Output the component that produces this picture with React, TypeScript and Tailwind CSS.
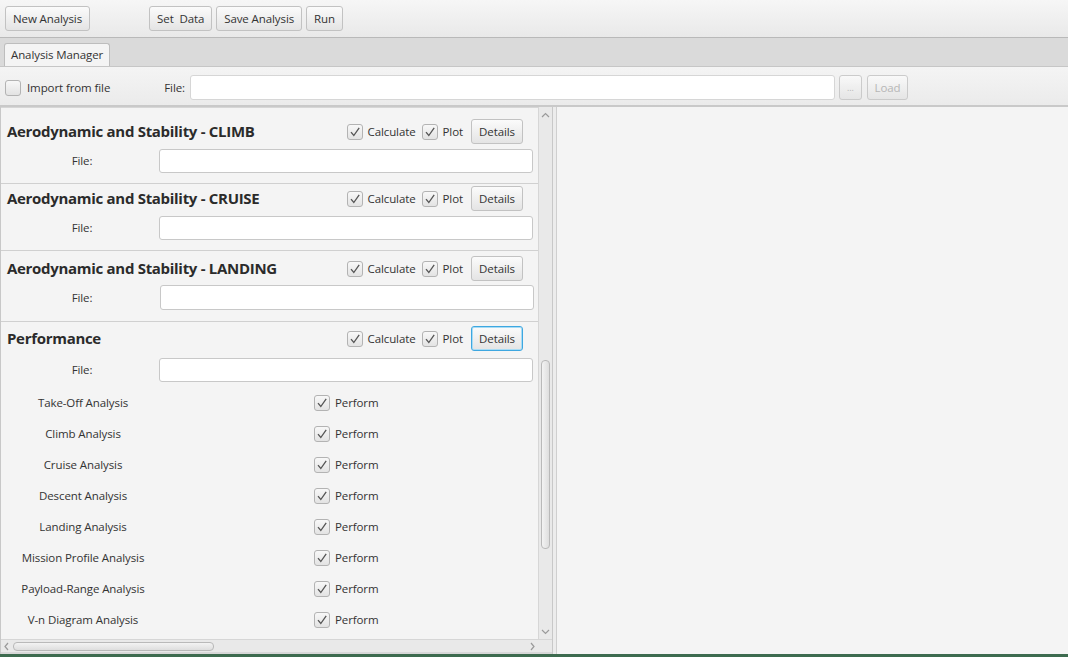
import React from 'react'

const FONT = { fontFamily: '"Open Sans", "Noto Sans", Arial, sans-serif' }

const TXT = 'text-[11.5px] tracking-[-0.1px]'

function Btn({ children, w, disabled, focused }: { children: React.ReactNode; w?: string; disabled?: boolean; focused?: boolean }) {
  return (
    <div
      className={`h-[25px] ${w ?? ''} px-[7px] flex items-center justify-center rounded-[3px] border ${TXT} whitespace-pre bg-gradient-to-b from-[#fbfbfb] to-[#e4e4e4] ${
        focused ? 'border-[#3ea7e0] shadow-[0_0_0_1px_#a8dcf5_inset]' : 'border-[#c2c2c2]'
      } ${disabled ? 'text-[#a9a9a9] opacity-80' : 'text-[#333]'}`}
    >
      {children}
    </div>
  )
}

function Check({ checked = true }: { checked?: boolean }) {
  return (
    <div className="w-[16px] h-[16px] shrink-0 rounded-[3px] border border-[#b3b3b3] bg-gradient-to-b from-[#f8f8f8] to-[#e3e3e3] flex items-center justify-center">
      {checked && (
        <svg width="12" height="12" viewBox="0 0 12 12">
          <path d="M2 6.2 L4.8 9.5 L10.2 1.8" fill="none" stroke="#555" strokeWidth="1.3" />
        </svg>
      )}
    </div>
  )
}

function Field({ className = '' }: { className?: string }) {
  return <div className={`rounded-[3px] border border-[#c8c8c8] bg-white ${className}`} />
}

function Section({
  title,
  focused,
  children,
  pt,
  gap,
  pb,
  field = 'w-[374px] h-[24px]',
}: {
  title: string
  focused?: boolean
  children?: React.ReactNode
  pt: string
  gap: string
  pb: string
  field?: string
}) {
  return (
    <div className={`border-b border-[#d0d0d0] ${pt} ${pb}`}>
      <div className="h-[25px] flex items-center pl-[6px] pr-[15px]">
        <div className="flex-1 text-[15px] font-bold text-[#2b2b2b] tracking-[-0.3px]">{title}</div>
        <Check />
        <span className={`ml-[4px] mr-[6px] ${TXT} text-[#333]`}>Calculate</span>
        <Check />
        <span className={`ml-[5px] mr-[8px] ${TXT} text-[#333]`}>Plot</span>
        <Btn w="w-[52px]" focused={focused}>Details</Btn>
      </div>
      <div className={`${gap} flex items-center`}>
        <div className={`w-[158px] pl-[4px] text-center ${TXT} text-[#333]`}>File:</div>
        <Field className={field} />
      </div>
      {children}
    </div>
  )
}

const PERFORM = [
  'Take-Off Analysis',
  'Climb Analysis',
  'Cruise Analysis',
  'Descent Analysis',
  'Landing Analysis',
  'Mission Profile Analysis',
  'Payload-Range Analysis',
  'V-n Diagram Analysis',
]

export default function App() {
  return (
    <div className="w-[1068px] h-[657px] overflow-hidden flex flex-col bg-[#f4f4f4] text-[#333]" style={FONT}>
      {/* Toolbar */}
      <div className="h-[38px] shrink-0 flex items-center px-[5px] gap-[4px] bg-gradient-to-b from-[#f6f6f6] to-[#e9e9e9] border-b border-[#b9b9b9]">
        <Btn>New Analysis</Btn>
        <div className="w-[51px]" />
        <Btn>Set  Data</Btn>
        <Btn>Save Analysis</Btn>
        <Btn>Run</Btn>
      </div>

      {/* Tab header */}
      <div className="h-[29px] shrink-0 bg-[#dadada] flex items-end pl-[4px] border-b border-[#c6c6c6]">
        <div className={`h-[23px] px-[6px] flex items-center rounded-t-[3px] border border-b-0 border-[#bdbdbd] bg-[#f4f4f4] ${TXT}`}>
          Analysis Manager
        </div>
      </div>

      {/* Import row */}
      <div className="h-[40px] shrink-0 flex items-center pt-[3px] pl-[5px] bg-gradient-to-b from-[#f4f4f4] to-[#ebebeb] border-b-2 border-[#c9c9c9]">
        <Check checked={false} />
        <span className={`ml-[6px] ${TXT}`}>Import from file</span>
        <span className={`ml-[54px] ${TXT}`}>File:</span>
        <Field className="ml-[5px] w-[645px] h-[25px] bg-[#f9f9f9] border-[#d6d6d6]" />
        <div className="ml-[4px]">
          <Btn w="w-[23px]" disabled>
            <span className="text-[9px]">...</span>
          </Btn>
        </div>
        <div className="ml-[5px]">
          <Btn w="w-[41px]" disabled>Load</Btn>
        </div>
      </div>

      {/* Split pane */}
      <div className="flex-1 min-h-0 flex">
        {/* Left scroll pane */}
        <div className="w-[553px] shrink-0 flex flex-col border-l border-[#c0c0c0] border-r border-[#c8c8c8]">
          <div className="flex-1 min-h-0 flex">
            <div className="flex-1 min-w-0 overflow-hidden pt-[3px] border-t border-[#d6d6d6]">
              <Section title="Aerodynamic and Stability - CLIMB" pt="pt-[8px]" gap="mt-[5px]" pb="pb-[10px]" />
              <Section title="Aerodynamic and Stability - CRUISE" pt="pt-[2px]" gap="mt-[5px]" pb="pb-[10px]" />
              <Section
                title="Aerodynamic and Stability - LANDING"
                pt="pt-[5px]"
                gap="mt-[4px]"
                pb="pb-[11px]"
                field="ml-[1px] w-[374px] h-[25px]"
              />
              <Section title="Performance" focused pt="pt-[4px]" gap="mt-[7px]" pb="pb-[20px]">
                <div className="mt-[5px]">
                  {PERFORM.map(p => (
                    <div key={p} className="h-[31px] flex items-center">
                      <div className={`w-[164px] text-center ${TXT}`}>{p}</div>
                      <div className="ml-[149px] flex items-center">
                        <Check />
                        <span className={`ml-[5px] ${TXT}`}>Perform</span>
                      </div>
                    </div>
                  ))}
                </div>
              </Section>
            </div>
            {/* Vertical scrollbar */}
            <div className="w-[14px] shrink-0 bg-[#e9e9e9] border-l border-[#d6d6d6] flex flex-col items-center">
              <svg width="9" height="12" viewBox="0 0 9 12" className="mt-[2px]">
                <path d="M1 8 L4.5 4.5 L8 8" fill="none" stroke="#9a9a9a" strokeWidth="1.2" />
              </svg>
              <div className="mt-[239px] w-[9px] h-[189px] rounded-[4px] border border-[#b9b9b9] bg-gradient-to-r from-[#f3f3f3] to-[#dedede]" />
              <div className="flex-1" />
              <svg width="9" height="12" viewBox="0 0 9 12" className="mb-[1px]">
                <path d="M1 4 L4.5 7.5 L8 4" fill="none" stroke="#9a9a9a" strokeWidth="1.2" />
              </svg>
            </div>
          </div>
          {/* Horizontal scrollbar */}
          <div className="h-[13px] shrink-0 flex border-t border-[#d6d6d6] bg-[#e9e9e9]">
            <div className="flex-1 flex items-center">
              <svg width="10" height="9" viewBox="0 0 10 9" className="ml-[1px]">
                <path d="M6 1 L3 4.5 L6 8" fill="none" stroke="#9a9a9a" strokeWidth="1.2" />
              </svg>
              <div className="ml-[1px] w-[201px] h-[9px] rounded-[4px] border border-[#b9b9b9] bg-gradient-to-b from-[#f3f3f3] to-[#dedede]" />
              <div className="flex-1" />
              <svg width="10" height="9" viewBox="0 0 10 9" className="mr-[1px]">
                <path d="M4 1 L7 4.5 L4 8" fill="none" stroke="#9a9a9a" strokeWidth="1.2" />
              </svg>
            </div>
            <div className="w-[14px] bg-[#e9e9e9]" />
          </div>
          <div className="h-[2px] shrink-0 bg-[#d8d8d8]" />
        </div>
        {/* Divider */}
        <div className="w-[4px] shrink-0 bg-[#ececec] border-r border-[#cfcfcf]" />
        {/* Right pane */}
        <div className="flex-1 bg-[#f4f4f4]" />
      </div>

      {/* Bottom strip (window behind) */}
      <div className="h-[3px] shrink-0 bg-[#3d6b4f]" />
    </div>
  )
}
